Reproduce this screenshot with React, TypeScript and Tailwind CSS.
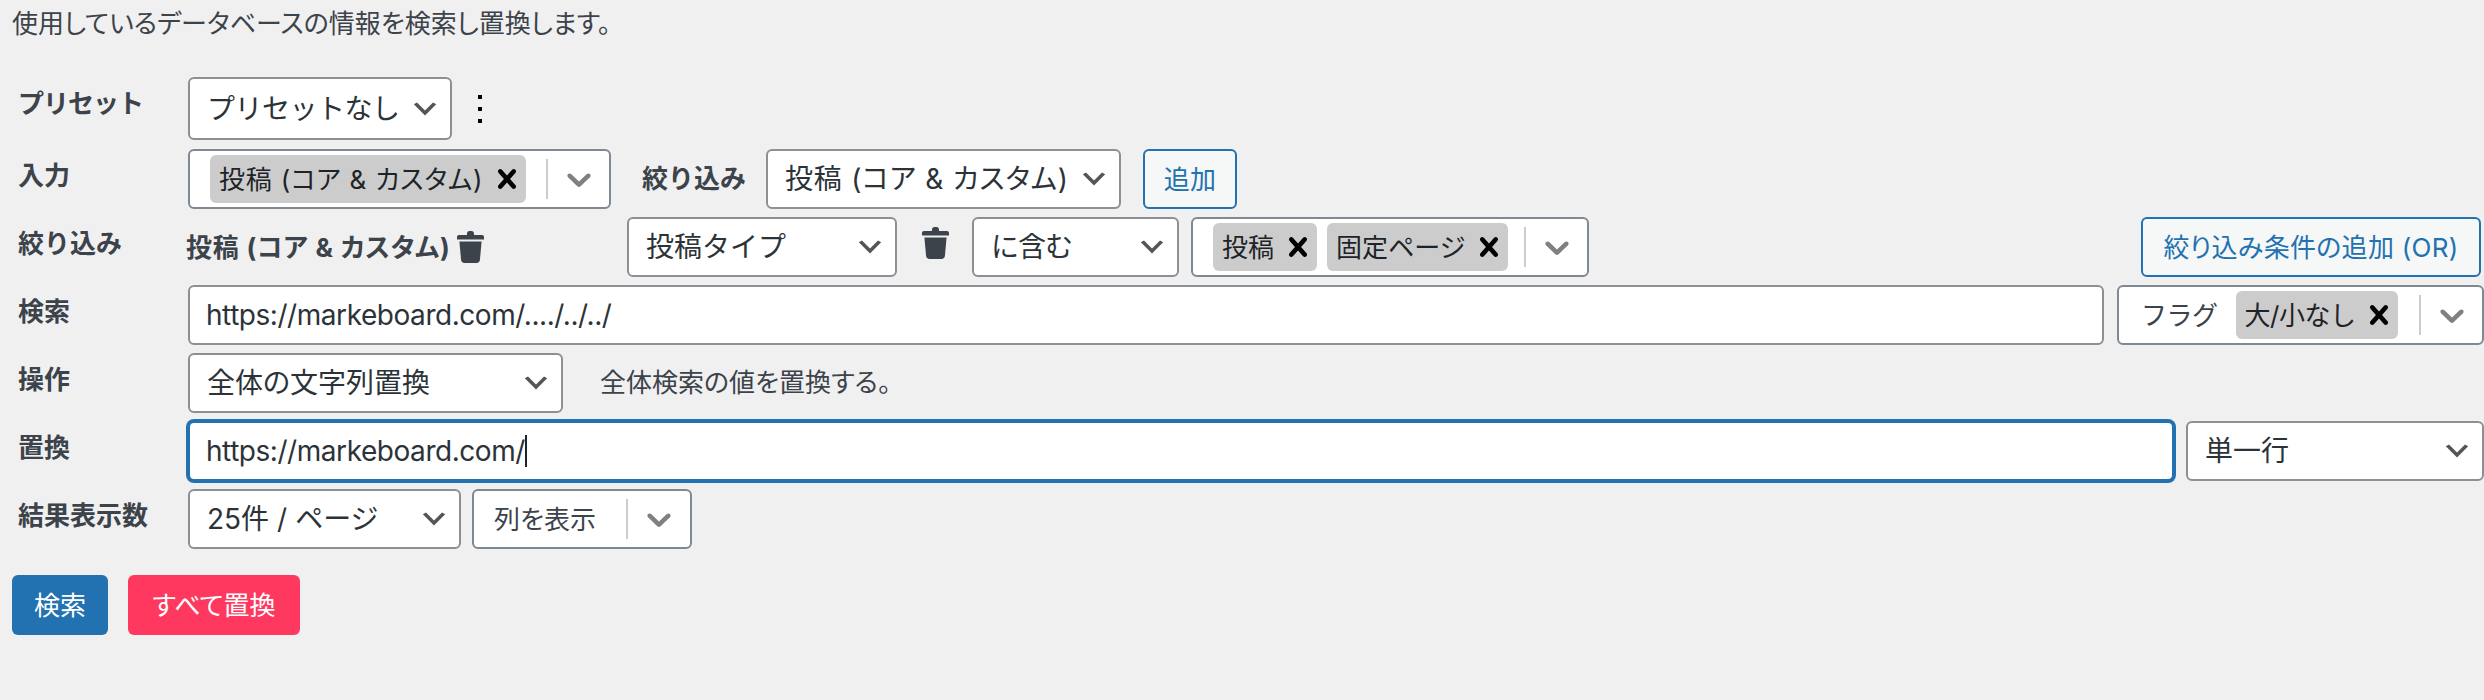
import React from 'react';

const Chevron = () => (
  <svg viewBox="0 0 20 20" className="h-[32px] w-[32px] shrink-0 fill-[#555]">
    <path d="M5 6l5 5 5-5 2 1-7 7-7-7 2-1z" />
  </svg>
);

const SoftChevron = () => (
  <svg viewBox="0 0 20 20" className="h-[40px] w-[40px] fill-[#808080]">
    <path d="M4.516 7.548c0.436-0.446 1.043-0.481 1.576 0l3.908 3.747 3.908-3.747c0.533-0.481 1.141-0.446 1.574 0 0.436 0.445 0.408 1.197 0 1.615-0.406 0.418-4.695 4.502-4.695 4.502-0.217 0.223-0.502 0.335-0.787 0.335s-0.57-0.112-0.789-0.335c0 0-4.287-4.084-4.695-4.502s-0.436-1.17 0-1.615z" />
  </svg>
);

const TagClose = () => (
  <svg viewBox="4.8 4.8 10.4 10.4" className="h-[20px] w-[20px] shrink-0 fill-black">
    <path d="M14.348 14.849c-0.469 0.469-1.229 0.469-1.697 0l-2.651-3.030-2.651 3.029c-0.469 0.469-1.229 0.469-1.697 0-0.469-0.469-0.469-1.229 0-1.697l2.758-3.15-2.759-3.152c-0.469-0.469-0.469-1.228 0-1.697s1.228-0.469 1.697 0l2.652 3.031 2.651-3.031c0.469-0.469 1.228-0.469 1.697 0s0.469 1.229 0 1.697l-2.758 3.152 2.758 3.15c0.469 0.469 0.469 1.229 0 1.698z" />
  </svg>
);

const Trash = () => (
  <svg viewBox="0 0 27 32" className="h-[32px] w-[27px] shrink-0 fill-[#3c434a]">
    <path d="M10 2.5C10 1.1 11 0 12.4 0h2.2C16 0 17 1.1 17 2.5V4h8c1.1 0 2 .9 2 2v2.5H0V6c0-1.1.9-2 2-2h8z" />
    <path d="M2.4 10.5h22.2l-1.7 18.6c-.2 1.7-1.6 2.9-3.2 2.9H7.3c-1.7 0-3-1.2-3.2-2.9z" />
  </svg>
);

const Label = ({ children }: { children: React.ReactNode }) => (
  <div className="w-[188px] shrink-0 pl-[18px] pt-[7px] text-[26px] font-bold leading-[40px] text-[#3c434a] [font-feature-settings:normal]">{children}</div>
);

const Select = ({ value, width, tall, textClass = '' }: { value: string; width: string; tall?: boolean; textClass?: string }) => (
  <div className={`flex ${tall ? 'h-[63px]' : 'h-[60px]'} ${width} shrink-0 items-center justify-between rounded-[6px] border-2 border-[#8c8f94] bg-white pl-[17px] pr-[9px] text-[28px] text-[#2c3338]`}>
    <span className={`whitespace-nowrap ${textClass}`}>{value}</span>
    <Chevron />
  </div>
);

const Tag = ({ text, textClass = '' }: { text: string; textClass?: string }) => (
  <div className="flex h-[48px] items-center gap-[14px] rounded-[6px] bg-[#cccccc] pl-[9px] pr-[9px] text-[26px] text-[#1d2327]">
    <span className={`whitespace-nowrap ${textClass}`}>{text}</span>
    <TagClose />
  </div>
);

const MultiSelect = ({ width, tags, prefix, textClass }: { width: string; tags?: string[]; prefix?: string; textClass?: string }) => (
  <div className={`flex h-[60px] ${width} shrink-0 items-center rounded-[6px] border-2 border-[#7e8993] bg-white pl-[20px] text-[26px] text-[#3c434a]`}>
    {prefix && <span className="ml-[2px] mr-[18px] whitespace-nowrap tracking-[-0.5px] [font-feature-settings:normal]">{prefix}</span>}
    <div className="flex items-center gap-[10px]">
      {tags?.map((tag) => <Tag key={tag} text={tag} textClass={textClass} />)}
    </div>
    <div className="ml-auto flex h-[40px] items-center">
      <div className="h-[40px] w-[2px] bg-[#cccccc]" />
      <div className="flex w-[61px] justify-center">
        <SoftChevron />
      </div>
    </div>
  </div>
);

const SecondaryButton = ({ children, width }: { children: React.ReactNode; width: string }) => (
  <button className={`h-[60px] ${width} shrink-0 whitespace-nowrap rounded-[6px] border-2 border-[#2271b1] bg-[#f6f7f7] text-[26px] tracking-[0.3px] text-[#2271b1]`}>
    {children}
  </button>
);

export default function App() {
  return (
    <div className="min-h-screen bg-[#f0f0f1] font-['Inter','Noto_Sans_CJK_JP',sans-serif] [font-feature-settings:'palt']">
      <p className="h-[77px] pl-[12px] pt-[4px] text-[26px] leading-[40px] text-[#3c434a]">使用しているデータベースの情報を検索し置換します。</p>

      <div className="flex flex-col gap-2">
        <div className="mb-px flex">
          <Label>
            <span className="tracking-[-1px]">プリセット</span>
          </Label>
          <Select value="プリセットなし" width="w-[264px]" tall textClass="tracking-[-0.5px] [font-feature-settings:normal]" />
          <svg viewBox="0 0 4 28" className="ml-[26px] mt-[18px] h-[28px] w-[4px] fill-black">
            <rect width="4" height="4" />
            <rect y="12" width="4" height="4" />
            <rect y="24" width="4" height="4" />
          </svg>
        </div>

        <div className="flex items-start">
          <Label>入力</Label>
          <MultiSelect width="w-[423px]" tags={['投稿 (コア & カスタム)']} textClass="tracking-[0.8px]" />
          <div className="ml-[31px] w-[124px] text-[26px] font-bold leading-[60px] text-[#3c434a] [font-feature-settings:normal]">絞り込み</div>
          <Select value="投稿 (コア & カスタム)" width="w-[355px]" textClass="tracking-[0.8px]" />
          <div className="ml-[22px]">
            <SecondaryButton width="w-[94px]">追加</SecondaryButton>
          </div>
        </div>

        <div className="flex items-start">
          <Label>絞り込み</Label>
          <div className="-ml-[2px] flex h-[60px] w-[441px] shrink-0 items-center text-[26px] font-bold text-[#3c434a]">
            <span className="whitespace-nowrap tracking-[0.8px]">投稿 (コア & カスタム)</span>
            <span className="ml-[6px]">
              <Trash />
            </span>
          </div>
          <Select value="投稿タイプ" width="w-[270px]" textClass="[font-feature-settings:normal]" />
          <div className="ml-[25px] mr-[23px] flex h-[52px] items-center">
            <Trash />
          </div>
          <Select value="に含む" width="w-[207px]" textClass="tracking-[-1px] [font-feature-settings:normal]" />
          <div className="ml-[12px]">
            <MultiSelect width="w-[398px]" tags={['投稿', '固定ページ']} />
          </div>
          <div className="ml-auto mr-[3px]">
            <SecondaryButton width="w-[340px]">絞り込み条件の追加 (OR)</SecondaryButton>
          </div>
        </div>

        <div className="flex items-start">
          <Label>検索</Label>
          <div className="flex h-[60px] min-w-0 flex-1 items-center rounded-[6px] border-2 border-[#8c8f94] bg-white pl-[16px] text-[28px] tracking-[-0.45px] text-[#2c3338]">
            https://markeboard.com/..../../../
          </div>
          <div className="ml-[13px]">
            <MultiSelect width="w-[367px]" prefix="フラグ" tags={['大/小なし']} textClass="tracking-[-0.5px] [font-feature-settings:normal]" />
          </div>
        </div>

        <div className="flex items-start">
          <Label>操作</Label>
          <Select value="全体の文字列置換" width="w-[375px]" />
          <div className="ml-[37px] text-[26px] leading-[60px] text-[#3c434a]">全体検索の値を置換する。</div>
        </div>

        <div className="flex items-start">
          <Label>置換</Label>
          <div className="flex h-[60px] min-w-0 flex-1 items-center rounded-[6px] border-2 border-[#2271b1] bg-white pl-[16px] text-[28px] tracking-[-0.45px] text-[#2c3338] shadow-[0_0_0_2px_#2271b1]">
            https://markeboard.com/
            <span className="h-[32px] w-[2px] bg-[#1d2327]" />
          </div>
          <div className="ml-[12px]">
            <Select value="単一行" width="w-[298px]" />
          </div>
        </div>

        <div className="flex items-start">
          <Label>結果表示数</Label>
          <Select value="25件 / ページ" width="w-[273px]" />
          <div className="ml-[11px] flex h-[60px] w-[220px] items-center rounded-[6px] border-2 border-[#7e8993] bg-white pl-[20px] text-[26px] text-[#3c434a]">
            <span className="whitespace-nowrap">列を表示</span>
            <div className="ml-auto h-[40px] w-[2px] bg-[#cccccc]" />
            <div className="flex w-[62px] justify-center">
              <SoftChevron />
            </div>
          </div>
        </div>
      </div>

      <div className="ml-[12px] mt-[26px] flex gap-[20px]">
        <button className="h-[60px] w-[96px] rounded-[6px] bg-[#2271b1] text-[26px] text-white">検索</button>
        <button className="h-[60px] w-[172px] rounded-[6px] bg-[#ff3860] text-[26px] text-white">すべて置換</button>
      </div>
    </div>
  );
}
